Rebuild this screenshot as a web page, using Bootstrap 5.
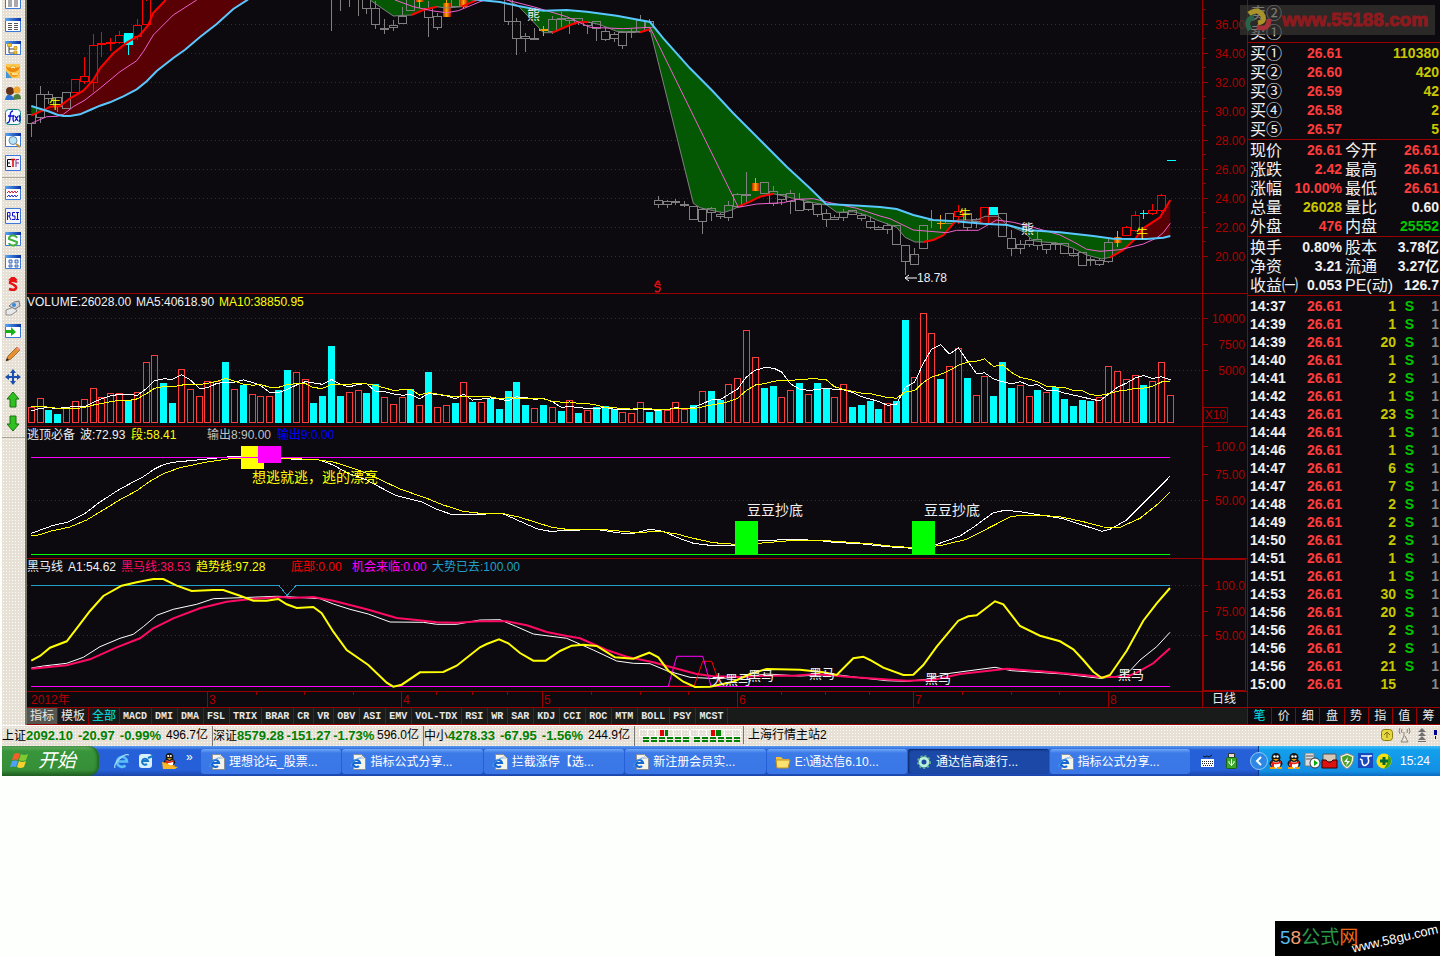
<!DOCTYPE html>
<html lang="zh-CN">
<head>
    <meta charset="UTF-8">
    <meta name="viewport" content="width=device-width, initial-scale=1.0">
    <title>通达信高速行情</title>
    <link href="https://cdn.jsdelivr.net/npm/bootstrap@5.3.0/dist/css/bootstrap.min.css" rel="stylesheet">
    <style>
        body { background: #fdfffd; font: 12px/16px "Liberation Sans", "Noto Sans CJK SC", sans-serif; color: #000; }
        button { font: inherit; color: inherit; background: none; border: 0; padding: 0; white-space: nowrap; }
        .app { margin-left: 2px; }
        .workspace { background: #0c0a0e; }

        /* Barra de ferramentas */
        .beige { background: radial-gradient(#fffdf4 1px, transparent 1px) 0 0 / 3px 3px #e6e0d6; }
        .tools { width: 25px; border-right: 2px solid #77786c; }
        .tool-list { margin-top: -10px; }
        .tool-list button { height: 23px; width: 22px; }
        .tool-list svg { width: 16px; height: 16px; display: block; margin: auto; }
        .tool-sep { height: 7px; border: 0; margin: 0; opacity: 1; background: linear-gradient(#a9a594, #a9a594) 0 3px / 100% 1px no-repeat; }

        /* Gráficos */
        .charts { min-width: 0; border-right: 1px solid #900; }
        .charts svg { display: block; width: 100%; height: auto; }
        .charts text { font-size: 12px; fill: #f0f0f0; }
        .charts .axis-text { fill: #b00000; text-anchor: end; }
        .charts .month-text { fill: #b00000; }
        .charts .note-text { font-size: 14px; }
        .charts .horse-text { font-size: 13px; }
        .frame-line { stroke: #900; fill: none; }
        .grid-line { stroke: #900; stroke-dasharray: 1 3; }
        .crisp { shape-rendering: crispEdges; }

        .tabs { height: 18px; background: #191b1a; color: #e8e8e8; border-top: 1px solid #900; border-bottom: 1px solid #900; }
        .tabs button { border-right: 1px solid #900; padding: 1px 3px 0; font-size: 12px; line-height: 15px; }
        .tabs .latin { font: 700 10px/15px "Liberation Mono", monospace; padding-right: 4px; }
        .tabs .picked { background: #55564f; }
        .cyan, .tabs .cyan { color: #00e8e8; }

        /* Cotações */
        .quotes { width: 192px; color: #f0f0f0; font-size: 16px; }
        .quotes table { table-layout: fixed; width: 100%; border-collapse: separate; border-spacing: 0; border-bottom: 1px solid #900; padding-top: 1px; }
        .quotes td, .quotes th { padding: 0 1px 0 2px; height: 19px; line-height: 19px; white-space: nowrap; font-weight: 400; text-align: left; }
        .quotes .num, .quotes .ticks td { font-size: 14px; font-weight: 700; text-align: right; padding-left: 0; }
        .quotes .ticks { border: 0; }
        .quotes .ticks td { height: 18px; line-height: 18px; }
        .quotes .ticks .clock { text-align: left; padding-left: 2px; }
        .asks { padding-top: 3px; }
        .w-label { width: 45px; }
        .w-value { width: 50px; }
        .w-label2 { width: 44px; }
        .up { color: #ff3c3c; }
        .vol { color: #c8c800; }
        .down { color: #00c800; }
        .dim { color: #888; }
        .side-tabs button { flex: 1; text-align: center; padding: 1px 0 0; background: #0c0a0e; }
        .side-tabs button:last-child { border: 0; }

        .site-mark { position: absolute; top: 5px; right: 5px; width: 195px; height: 30px; background: rgba(58, 58, 54, .65); color: #8d1a1e; font-size: 19px; font-weight: 700; line-height: 30px; -webkit-text-stroke: 1px #8d1a1e; }

        /* Barra de status */
        .status { height: 21px; line-height: 19px; border-top: 1px solid #fff; }
        .status .cell-box { width: 211px; border-right: 1px solid #777; }
        .status b { color: #008000; font-size: 13px; }
        .status .lights { width: 109px; border-right: 1px solid #777; }

        /* Barra de tarefas */
        .taskbar { height: 30px; color: #fff; background: linear-gradient(#5c9cf0, #2560d8 4px, #2560d8 24px, #1a45a8); }
        .start { width: 97px; border-radius: 0 10px 10px 0; font-size: 19px; font-style: italic; background: linear-gradient(#6cb468, #38953a 5px, #368f38 24px, #205c22); box-shadow: inset -2px 0 3px #1f6424; }
        .quick { width: 102px; padding-left: 15px; }
        .task { flex: 1 1 0; min-width: 0; margin: 3px 1px 2px 0; padding-left: 8px; border-radius: 3px; background: linear-gradient(#70a8f8, #3c7ae8 4px, #3a76e6); overflow: hidden; }
        .task.pressed { background: #1c48a8; box-shadow: inset 1px 1px 2px #0c2868; }
        .tasks { flex: 1 1 0; min-width: 0; }
        .langs { width: 67px; padding-left: 10px; gap: 12px; }
        .tray { width: 182px; background: linear-gradient(#40bcf8, #12a0ec 4px, #1290e4 25px, #0c6cc0); border-left: 1px solid #083c90; }
        .tray .arrow { margin-left: -9px; }

        .maker { width: 165px; height: 35px; background: #000; font-size: 19px; line-height: 34px; padding-left: 5px; }
        .maker-site { position: absolute; left: 76px; top: 10px; color: #fff; font-size: 13px; line-height: 16px; transform: rotate(-13deg); }
    </style>
</head>
<body>
<!-- Ícones -->
<svg width="0" height="0" class="position-absolute">
    <defs>
        <linearGradient id="fire"><stop offset="0" stop-color="#b81c00"/><stop offset=".5" stop-color="#ffa800"/><stop offset="1" stop-color="#b81c00"/></linearGradient>
        <linearGradient id="bar"><stop offset="0" stop-color="#58a8f8"/><stop offset="1" stop-color="#0830a0"/></linearGradient>
        <symbol id="win" viewBox="0 0 16 16"><path d="M.5 1.5h15v13H.5z" fill="#fff" stroke="#3c78d8"/><path d="M0 1h16v3H0z" fill="url(#bar)"/></symbol>
        <symbol id="page-e" viewBox="0 0 16 16"><path d="M3.5.5h8l4 4v11h-12z" fill="#f4f4ea" stroke="#8a8f98"/><path d="M11 1v4h4" fill="#cfd3d8"/><path d="M2 9h8a3.500 3.500 0 1 0-1 3" fill="none" stroke="#1668d0" stroke-width="2.2"/><path d="M1 13C0 10 7 3 11 4" fill="none" stroke="#4aa0f0"/></symbol>
        <symbol id="penguin" viewBox="0 0 16 16"><ellipse cx="8" cy="10.500" rx="6.500" ry="4.500" fill="#181818"/><ellipse cx="8" cy="11.500" rx="4.500" ry="4" fill="#fff"/><circle cx="8" cy="4.500" r="4.500" fill="#181818"/><circle cx="6.500" cy="3.500" r="1.200" fill="#fff"/><circle cx="9.500" cy="3.500" r="1.200" fill="#fff"/><path d="M5 6h6l-3 2z" fill="#f8a800"/><path d="M3 8q5 3 10 0v2q-5 2-7 1v3H4v-4z" fill="#e82010"/><path d="M2 14h5v2H2zM9 14h5v2H9z" fill="#f8a000"/></symbol>
        <symbol id="ie" viewBox="0 0 16 16"><path d="M3 8.500h10a5 5 0 1 0-1.500 4" fill="none" stroke="#5cc0f8" stroke-width="2.600"/><path d="M1 15C-1 11 9 0 15 2" fill="none" stroke="#a8dcf8" stroke-width="1.200"/></symbol>
    </defs>
</svg>

<div class="d-flex flex-column min-vh-100 overflow-hidden">
<div class="app">
    <div class="workspace d-flex position-relative">
        <nav class="tools beige overflow-hidden flex-shrink-0">
            <div class="tool-list d-flex flex-column">
                <button aria-label="报表"><svg viewBox="0 0 16 16"><use href="#win"/><path d="M3 6h4M3 8h4M3 10h4M3 12h4M9 6h4M9 8h4M9 10h4M9 12h4" stroke="#555"/></svg></button>
                <button aria-label="列表"><svg viewBox="0 0 16 16"><use href="#win"/><path d="M3 6.500h4M3 8.500h4M3 10.500h4M3 12.500h4M9 6.500h4M9 8.500h4M9 10.500h4M9 12.500h4" stroke="#555"/></svg></button>
                <button aria-label="树"><svg viewBox="0 0 16 16"><use href="#win"/><path d="M4 6v7h5M4 9h6" stroke="#444" fill="none"/><path d="M2.500 3.500h4v3h-4zM9 6.500h3v3H9zM9 11h3v3H9z" fill="#f4c838" stroke="#b08010" stroke-width=".6"/></svg></button>
                <button aria-label="财务"><svg viewBox="0 0 16 16"><path d="M1 1h14v14H1z" fill="#f8c850"/><path d="M1 8l6 7H1z" fill="#4098d8"/><path d="M1 3q3 3 4 1 3-3 6 0 1 2 4-1-1 6-7 6T1 3z" fill="#f08808"/><path d="M5 10h9q-1 4-5 4t-4-4z" fill="#f89820"/><path d="M6 5q2-2 4 0M7 11h6" stroke="#fff4b0" stroke-width="1.500" fill="none"/></svg></button>
                <button aria-label="用户"><svg viewBox="0 0 16 16"><circle cx="5" cy="5" r="4" fill="#603018"/><circle cx="12" cy="4" r="3.500" fill="#f0a830"/><path d="M0 14q1-6 5-5t4 5z" fill="#2c70d0"/><path d="M8 14q0-6 4-6t4 5z" fill="#50803c"/></svg></button>
                <button aria-label="公式"><svg viewBox="0 0 16 16"><rect x=".5" y=".5" width="15" height="15" rx="3" fill="#f4faff" stroke="#108888"/><path d="M2 14q3 0 3-6t3-6M3 7h5M9 6q-2 4 0 7M14 6q2 4 0 7M10 7l3 5M13 7l-3 5" fill="none" stroke="#1010d0" stroke-width="1.300"/></svg></button>
                <button aria-label="搜索"><svg viewBox="0 0 16 16"><use href="#win"/><circle cx="8" cy="8.500" r="4" fill="#b8e4f8" stroke="#6888a8"/><path d="M11 12l4 3" stroke="#c09030" stroke-width="2"/></svg></button>
                <button aria-label="ETF"><svg viewBox="0 0 16 16"><path d="M.5.500h15v15H.5z" fill="#f4f4fa" stroke="#3c78d8"/><path d="M6 4.500H2.500v7H6M2.500 8H5" fill="none" stroke="#000"/><path d="M6 4.500h4M8 4.500V12" stroke="#e00000" stroke-width="1.500"/><path d="M14 4.500h-3V12M11 8h3" fill="none" stroke="#803090"/></svg></button>
                <hr class="tool-sep">
                <button aria-label="走势"><svg viewBox="0 0 16 16"><use href="#win"/><path d="M2 8l2-2 1 2 2-2 1 2 2-2 1 2 2-2" fill="none" stroke="#d02040"/><path d="M2 12l2-2 1 2 2-2 1 2 2-2 1 2 2-2" fill="none" stroke="#2030d0"/></svg></button>
                <button aria-label="RSI"><svg viewBox="0 0 16 16"><path d="M.5.500h15v15H.5z" fill="#f4f4fa" stroke="#3c78d8"/><path d="M2.500 12V4.500H5V8H2.500M4 8l2 4M10 4.500H7.500V8H10v3.500H7M11 4.500h3M12.500 4.500v7M11 11.500h3" fill="none" stroke="#1010c8"/></svg></button>
                <button aria-label="刷新"><svg viewBox="0 0 16 16"><use href="#win"/><path d="M12 7a4 3 0 0 0-8 1l8 3a4 3 0 0 1-8 1" fill="none" stroke="#40b040" stroke-width="2"/></svg></button>
                <button aria-label="多窗"><svg viewBox="0 0 16 16"><use href="#win"/><path d="M4 6h3v3H4zM10 6h3v3h-3zM4 11h3v2H4zM10 11h3v2h-3z" fill="#cde" stroke="#4068c0"/></svg></button>
                <button aria-label="除权"><svg viewBox="0 0 16 16"><path d="M12 5q-7-3-7 1 7 3 6 5-1 3-7 1M6 2l2-2 2 2z" fill="none" stroke="#e81010" stroke-width="2.400"/></svg></button>
                <button aria-label="电话"><svg viewBox="0 0 16 16"><path d="M1 10l8-3 3 4-6 4H1z" fill="#e8e8e8" stroke="#909090"/><path d="M4 6q4-5 10-5l1 5-5 3z" fill="#d0d4d8" stroke="#787878"/><circle cx="9" cy="5" r="2" fill="#3888d8"/></svg></button>
                <button aria-label="导出"><svg viewBox="0 0 16 16"><use href="#win"/><path d="M0 7h6V4l5 5-5 4v-3H0z" fill="#18b018"/></svg></button>
                <button aria-label="画线"><svg viewBox="0 0 16 16"><path d="M1 15l2-5 9-9 3 3-9 9z" fill="#e89030" stroke="#805020" stroke-width=".7"/><path d="M11 2l3 3 1-2-2-2z" fill="#f09090"/><path d="M1 15l1-3 2 2z" fill="#222"/></svg></button>
                <button aria-label="移动"><svg viewBox="0 0 16 16"><path d="M8 0l3 4H9v3h3V5l4 3-4 3V9H9v3h2l-3 4-3-4h2V9H4v2L0 8l4-3v2h3V4H5z" fill="#1c50b0"/></svg></button>
                <button aria-label="向上"><svg viewBox="0 0 16 16"><path d="M8 0l6 7h-3v8H5V7H2z" fill="#30c020" stroke="#187010"/></svg></button>
                <button aria-label="向下"><svg viewBox="0 0 16 16"><path d="M8 16l6-7h-3V1H5v8H2z" fill="#30c020" stroke="#187010"/></svg></button>
                <hr class="tool-sep">
            </div>
        </nav>

        <!-- Gráficos -->
        <main class="charts flex-grow-1 d-flex flex-column">
            <svg viewBox="27 0 1220 294">
                <g id="priceGrid"></g>
                <g id="priceArea"></g>
                <g id="candles" class="crisp"></g>
                <g id="priceLines"></g>
                <text x="49" y="109" style="fill:#ff0">牛</text>
                <text x="959" y="219" style="fill:#ff0">牛</text>
                <text x="1136" y="238" style="fill:#ff0">牛</text>
                <text class="horse-text" x="527" y="19">熊</text>
                <text class="horse-text" x="1021" y="233">熊</text>
                <path d="M905 278h12M909 275l-4 3 4 3" stroke="#fff" fill="none"/>
                <text x="917" y="282">18.78</text>
                <path d="M661 285q-6-2-6 0 0 2 3 2t2 3-5 1M656 283l2-2 2 2" stroke="#e01010" stroke-width="1.500" fill="none"/>
                <path class="frame-line crisp" d="M27 293.500h1220M1202.500 0v294"/>
            </svg>
            <svg viewBox="27 294 1220 133">
                <g id="volGrid"></g>
                <g id="volBars" class="crisp"></g>
                <g id="volLines" class="crisp"></g>
                <text x="27" y="306">VOLUME:26028.00</text><text x="136" y="306">MA5:40618.90</text><text x="219" y="306" style="fill:#ff0">MA10:38850.95</text>
                <path class="frame-line crisp" d="M27 426.500h1220M1202.500 294v133M1203.500 407.500h24v15h-24z"/>
                <text class="axis-text" x="1226" y="419">X10</text>
            </svg>
            <svg viewBox="27 427 1220 132">
                <g id="waveGrid"></g>
                <g id="waveLines" class="crisp"></g>
                <path d="M241 446h23v23h-23z" fill="#ff0"/><path d="M258 446h23v17h-23z" fill="#f0f"/>
                <path d="M735 521h23v33h-23zM912 521h23v33h-23z" fill="#0f0"/>
                <path class="crisp" d="M31 457.500h1139" stroke="#f0f"/><path class="crisp" d="M31 554.500h1139" stroke="#0f0"/>
                <text class="note-text" x="252" y="482" style="fill:#ff0">想逃就逃，逃的漂亮</text>
                <text class="note-text" x="747" y="515">豆豆抄底</text><text class="note-text" x="924" y="515">豆豆抄底</text>
                <text x="27" y="439">逃顶必备</text><text x="80" y="439">波:72.93</text><text x="131" y="439" style="fill:#ff0">段:58.41</text>
                <text x="207" y="439" style="fill:#c0c0c0">输出8:90.00</text><text x="277" y="439" style="fill:#00f">输出9:0.00</text>
                <path class="frame-line crisp" d="M27 558.500h1220M1202.500 427v132"/>
            </svg>
            <svg viewBox="27 559 1220 133">
                <g id="horseGrid"></g>
                <g id="horseLines"></g>
                <text class="horse-text" x="712" y="684">大黑马</text><text class="horse-text" x="748" y="680">黑马</text>
                <text class="horse-text" x="809" y="678">黑马</text><text class="horse-text" x="925" y="683">黑马</text><text class="horse-text" x="1118" y="679">黑马</text>
                <text x="27" y="571">黑马线</text><text x="68" y="571">A1:54.62</text><text x="121" y="571" style="fill:#ff0a64">黑马线:38.53</text>
                <text x="196" y="571" style="fill:#ff0">趋势线:97.28</text><text x="291" y="571" style="fill:#f00">底部:0.00</text>
                <text x="352" y="571" style="fill:#f0f">机会来临:0.00</text><text x="432" y="571" style="fill:#20a0c8">大势已去:100.00</text>
                <path class="frame-line crisp" d="M27 691.500h1220M1202.500 559v133M1203.500 559.500h42v131h-42z"/>
            </svg>
            <svg viewBox="27 692 1220 15">
                <g id="months" class="crisp"></g>
                <text class="month-text" x="31" y="704">2012年</text>
                <path class="frame-line crisp" d="M1202.500 692v15"/>
                <text x="1212" y="703">日线</text>
            </svg>
            <div id="indicatorTabs" class="tabs d-flex overflow-hidden">
                <button class="picked">指标</button><button>模板</button><button class="cyan">全部</button>
            </div>
        </main>

        <!-- Cotações -->
        <aside class="quotes d-flex flex-column flex-shrink-0">
            <div class="asks"><table><tr><th>卖②</th></tr><tr><th>卖①</th></tr></table></div>
            <table id="bids"><colgroup><col class="w-label"><col class="w-value"><col></colgroup></table>
            <table id="facts"><colgroup><col class="w-label"><col class="w-value"><col class="w-label2"><col></colgroup></table>
            <table id="shares"><colgroup><col class="w-label"><col class="w-value"><col class="w-label2"><col></colgroup></table>
            <table id="ticks" class="ticks"><colgroup><col class="w-label"><col class="w-value"><col style="width:54px"><col style="width:18px"><col></colgroup></table>
            <div class="tabs side-tabs d-flex mt-auto">
                <button class="cyan">笔</button><button>价</button><button>细</button><button>盘</button><button>势</button><button>指</button><button>值</button><button>筹</button>
            </div>
        </aside>
        <div class="site-mark d-flex">
            <svg class="me-1 flex-shrink-0" width="38" height="30" viewBox="0 0 38 30" fill="none" stroke-width="5"><path d="M9 9q9-7 14 2 2 6-5 7" stroke="#a89428"/><path d="M14 12q-10 3-4 13" stroke="#28644a"/><path d="M17 22q12 4 12-8" stroke="#a83038"/></svg>
            <span>www.55188.com</span>
        </div>
    </div>

    <!-- Status -->
    <footer class="status beige d-flex">
        <div class="cell-box d-flex justify-content-between pe-1"><span>上证<b>2092.10</b></span><b>-20.97</b><b>-0.99%</b><span>496.7亿</span></div>
        <div class="cell-box d-flex justify-content-between pe-1"><span>深证<b>8579.28</b></span><b>-151.27</b><b>-1.73%</b><span>596.0亿</span></div>
        <div class="cell-box d-flex justify-content-between pe-1"><span>中小<b>4278.33</b></span><b>-67.95</b><b>-1.56%</b><span>244.9亿</span></div>
        <svg class="lights crisp" height="18" viewBox="0 0 109 18">
            <path d="M4.500 3.500h50v7h-50zM56.500 3.500h50v7h-50zM12.500 3v7M20.500 3v7M38.500 3v7M46.500 3v7M64.500 3v7M72.500 3v7M90.500 3v7M98.500 3v7" fill="none" stroke="#fff"/>
            <path d="M25 4h4v6h-4zM77 4h4v6h-4z" fill="#e00000"/><path d="M30 4h3v6h-3zM82 4h5v6h-5z" fill="#008000"/>
            <path d="M8 12h46M60 12h46M8 15h46M60 15h46" stroke="#008000" stroke-width="2" stroke-dasharray="6 2"/>
        </svg>
        <span class="ps-1 flex-grow-1">上海行情主站2</span>
        <svg width="62" height="18" viewBox="0 0 62 18">
            <rect x="3.500" y="3.500" width="11" height="11" rx="3" fill="#e8d840" stroke="#8a7c10"/><path d="M9 12V6M6 9l3-3 3 3" stroke="#7a6c10" fill="none"/>
            <path d="M26 6v4l-3 6h7l-3-6M22 2q-2 3 0 6M31 2q2 3 0 6M24 3q-1 2 0 4M29 3q1 2 0 4" fill="none" stroke="#8a8474"/>
            <path d="M44 2l4 4h-8zM44 6l4 4h-8zM44 10l4 4h-8zM40 15h8v1h-8z" fill="#707070"/><path d="M56 4h3v5h-3zM57 10h1v3h-1z" fill="#000090"/>
        </svg>
    </footer>

    <!-- Barra de tarefas -->
    <nav class="taskbar d-flex">
        <button class="start d-flex align-items-center gap-2 ps-2">
            <svg width="20" height="20" viewBox="0 0 20 20"><path d="M4 3q3-2 6 0L8 9q-3-1-6 0z" fill="#f06028"/><path d="M11 3q3 2 7 0l-2 6q-4 2-7 0z" fill="#80cc30"/><path d="M2 10q3-1 6 0l-2 6q-3-1-6 0z" fill="#50a0f8"/><path d="M9 10q3 2 7 0l-2 6q-4 2-7 0z" fill="#f8d030"/></svg>开始
        </button>
        <div class="quick d-flex align-items-center gap-2">
            <svg width="16" height="16"><use href="#ie"/></svg>
            <svg width="16" height="16" viewBox="0 0 16 16"><rect x="1" y="1" width="13" height="14" rx="3" fill="#d8f0fc"/><path d="M5 8h5a3 3 0 1 0-1 3M10 5l5-2" fill="none" stroke="#1878c8" stroke-width="2"/></svg>
            <svg width="16" height="16" viewBox="0 0 16 16"><use href="#penguin" width="15" height="14"/><path d="M0 9q5 1 8 3t8 2l-3 2H1z" fill="#f8b828"/></svg>
            <span class="pb-2">»</span>
        </div>
        <div id="tasks" class="tasks d-flex"></div>
        <div class="langs d-flex align-items-center">
            <svg width="13" height="14" viewBox="0 0 13 14"><path d="M0 5h13v8H0z" fill="#fff"/><path d="M1 7.500h11M1 9.500h11M2 11.500h9" stroke="#222" stroke-dasharray="1 1"/><path d="M2 2l2 1 2-1 2 1 3-2" stroke="#111" fill="none"/></svg>
            <svg width="11" height="16" viewBox="0 0 11 16"><path d="M2.500.500h6v5h-6z" fill="#ddd" stroke="#333"/><rect x=".5" y="4.500" width="10" height="11" rx="1" fill="#38a828" stroke="#1c6014"/><path d="M5.500 13V6M3 8v2l2.500 2L8 10V8" stroke="#fff" fill="none"/></svg>
        </div>
        <div class="tray d-flex align-items-center">
            <button class="arrow" aria-label="显示"><svg class="d-block" width="18" height="20" viewBox="0 0 18 20"><circle cx="9" cy="10" r="8.500" fill="#2c88e4" stroke="#90c8f8"/><path d="M11 6l-4 4 4 4" stroke="#fff" stroke-width="2" fill="none"/></svg></button>
            <svg width="124" height="16" viewBox="0 0 124 16">
                <use href="#penguin" width="16" height="16"/><use href="#penguin" x="18" width="16" height="16"/>
                <path d="M37 0h9v13h-9z" fill="#ddd" stroke="#777"/><path d="M38 3h7M38 6h7" stroke="#555"/><circle cx="47" cy="10" r="5" fill="#fff" stroke="#333"/><path d="M46 7l4 3-4 3z" fill="#0a0"/>
                <path d="M55 1h13v8H55z" fill="#d8c8b8" stroke="#555"/><path d="M54 7h4l2 2h3l2-2h4v8H54z" fill="#e01010" stroke="#300"/>
                <path d="M72 3l7-3 7 3q0 9-7 13-7-4-7-13z" fill="#f4f4d8" stroke="#888"/><path d="M74 4l5-2 5 2q0 7-5 10-5-3-5-10z" fill="#48a028"/><path d="M80 4l-4 5h3l-1 4 4-5h-3z" fill="#fff"/>
                <path d="M90 0h15v15H90z" fill="#1848c0"/><path d="M92 6l2 1q0 7 4 5t2-7q1-3 4-2M93 3h9" stroke="#fff" stroke-width="1.500" fill="none"/>
                <circle cx="116" cy="8" r="7.500" fill="#f8e010"/><path d="M120 2a7.500 7.500 0 0 1-4 13.500q5-6 4-13.500z" fill="#38a020"/><path d="M116 4v8M112 8h8" stroke="#063" stroke-width="3"/>
            </svg>
            <span class="ms-2">15:24</span>
        </div>
    </nav>
</div>
<div class="maker position-relative mt-auto align-self-end"><span style="color:#58b8f0">5</span><span style="color:#f0a070">8</span><span style="color:#289848">公式</span><span style="color:#f06818">网</span><span class="maker-site">www.58gu.com</span></div>
</div>

<script src="https://cdn.jsdelivr.net/npm/bootstrap@5.3.0/dist/js/bootstrap.bundle.min.js"></script>
<script>
    // Coordenadas dos dados em terços de pixel
    const el = id => document.getElementById(id);
    const barX = i => Math.floor(31.3 + i * 8.83) + 0.5;
    const row = y => Math.floor(y / 3) + 0.5;
    const pts = (list, dy) => list.map(([x, y]) => `${(x / 3).toFixed(1)},${((y + dy) / 3).toFixed(1)}`).join(' ');
    const parse = s => s.split(' ').map(p => p.split(',').map(Number));
    const line = (list, color, width = 1, dy = 0) => `<polyline points="${pts(list, dy)}" fill="none" stroke="${color}" stroke-width="${width}"/>`;

    function grid(id, ys, labels, left = 27) {
        el(id).innerHTML = ys.map(y => `<path class="grid-line crisp" d="M${left} ${y}.5H1202"/>`).join('') +
            labels.map(([y, t]) => `<path class="frame-line crisp" d="M1203 ${y}.5h5"/><text class="axis-text" x="1245" y="${y + 5}">${t}</text>`).join('');
    }

    // Preço
    const prices = [];
    for (let p = 36, y = 24; p >= 20; p -= 2, y += 29) prices.push([y, p + '.00']);
    grid('priceGrid', prices.map(p => p[0]), prices);
    el('priceGrid').innerHTML += prices.map(([y]) => `<path class="frame-line crisp" d="M1203 ${y - 15}.5h3"/>`).join('');

    const slow = parse('94,318 120,326 145,334 172,344 190,348 210,348 240,343 270,330 300,317 330,307 370,289 410,268 440,244 470,213 520,174 555,149 600,111 650,72 700,27 742,0 800,-60 1060,-60 1100,-10 1250,-20 1440,0 1500,6 1555,18 1630,32 1700,30 1760,35 1850,47 1950,66 1990,115 2070,205 2140,275 2200,340 2280,420 2360,500 2430,565 2478,612 2580,617 2640,621 2690,627 2740,645 2800,660 2866,664 2950,671 3022,675 3080,690 3180,697 3280,708 3340,716 3405,717 3440,717 3490,713 3511,708');
    const fast = parse('94,346 120,335 130,331 150,320 180,318 210,295 250,272 280,240 300,205 340,160 380,128 420,105 445,75 460,38 497,0 560,-60 1060,-60 1110,0 1180,48 1234,45 1270,30 1310,20 1340,24 1385,20 1430,0 1470,-30 1555,18 1595,60 1630,98 1657,98 1710,75 1735,67 1765,66 1800,74 1850,94 1920,97 1950,88 2080,610 2100,623 2140,632 2170,638 2200,628 2215,620 2250,605 2280,590 2320,581 2380,595 2440,608 2480,615 2510,637 2560,635 2600,646 2630,660 2690,682 2715,712 2745,726 2770,726 2800,720 2830,706 2850,682 2866,664 2875,660 2930,660 2955,649 2995,649 3022,675 3070,695 3100,722 3130,726 3170,729 3220,745 3260,765 3305,777 3330,772 3370,750 3405,717 3430,685 3480,652 3511,600');
    const midLeft = parse('94,370 140,350 172,349 190,343 220,320 255,300 300,265 360,215 410,182 430,155 460,105 520,45 590,0');
    const midRight = parse('1185,0 1240,20 1300,33 1340,38 1375,32 1440,5 1480,-8 1520,0 1600,20 1700,50 1770,82 1870,86 1950,82 2215,622 2270,612 2350,608 2390,598 2440,596 2490,608 2570,625 2640,648 2670,656 2740,690 2840,698 2870,691 2935,691 2990,660 3040,667 3100,682 3180,705 3220,725 3260,748 3300,754 3360,749 3430,732 3470,714 3490,698 3511,670');
    const cut = (list, a, b) => list.filter(p => p[0] >= a && p[0] <= b);
    const area = (a, b, color) => `<polygon points="${pts(cut(fast, a, b).concat(cut(slow, a, b).reverse()), 0)}" fill="${color}"/>`;
    el('priceArea').innerHTML = area(94, 130, '#045804') + area(130, 1060, '#580004') + area(1060, 1440, '#045804') +
        area(1555, 2866, '#045804') + area(2866, 3022, '#580004') + area(3022, 3405, '#045804') + area(3405, 3511, '#580004');
    el('priceLines').innerHTML = line(cut(fast, 1100, 3330), '#808080') +
        [[94, 497], [1234, 1310], [1385, 1430], [1657, 1765], [1920, 1950], [2215, 2320], [2770, 2875], [3330, 3511]].map(([a, b]) => line(cut(fast, a, b), '#f00', 2)).join('') +
        line(midLeft, '#f060d0') + line(midRight, '#f060d0') + line(slow, '#58c8ff', 2);

    // [índice, máxima, topo, base, mínima, tipo]
    const candles = `0,343,343,370,410,g 1,255,283,352,367,g 2,272,283,295,310,g 3,292,292,320,335,g 4,277,277,325,325,g 5,235,238,277,277,r 6,168,229,244,250,r 7,99,136,247,275,r 8,93,131,133,170,r 9,112,127,130,152,r 10,91,106,127,130,r 11,99,99,132,164,c 12,55,76,109,118,r 13,0,-10,74,74,r
        34,-10,-10,-6,90,g 35,-10,-10,-6,30,g 36,-10,-10,-6,20,g 37,-10,-10,-6,45,g 38,-10,-10,26,40,g 39,0,26,74,86,g 40,55,85,87,101,g 41,58,76,82,90,g 42,20,49,71,71,g 43,-10,-10,30,30,g 44,-10,-10,4,22,o 45,0,25,52,110,g 46,37,49,82,88,g 47,-10,6,50,50,o 48,-10,-10,20,20,g 49,-10,-10,18,26,o
        54,-10,-10,65,74,g 55,52,65,115,164,g 56,97,109,116,155,g 57,82,115,119,119,g 58,75,89,90,107,o 59,45,58,94,100,g 60,34,55,57,78,g 61,52,56,60,101,g 62,55,55,68,72,g 63,66,68,77,101,g 64,62,65,84,122,g 65,80,94,118,122,g 66,94,103,115,125,g 67,97,97,136,146,g 68,84,94,97,113,g 69,42,61,94,94,g 70,55,64,82,94,g
        71,586,601,613,623,g 72,598,604,613,623,g 73,595,603,607,613,g 74,600,613,616,620,g 75,619,619,658,658,g 76,622,628,664,701,g 77,619,626,637,662,g 78,637,643,649,655,g 79,601,616,652,661,g 80,577,583,619,622,g 81,514,583,587,605,g 82,531,546,570,570,o 83,546,546,580,580,g 84,556,574,610,616,g 85,583,583,598,613,g 86,568,580,604,641,g 87,577,598,631,631,g 88,604,607,628,630,g 89,610,613,643,648,g 90,625,640,658,680,g 91,643,652,658,658,g 92,625,637,652,661,g 93,628,631,643,643,g 94,637,645,655,661,g 95,646,664,682,685,g
        96,676,682,688,688,g 97,667,676,688,700,g 98,676,676,733,733,g 99,736,736,784,824,g 100,742,763,793,793,g 101,676,676,745,745,g 102,628,660,662,682,g 103,642,670,671,685,o 104,640,640,670,670,g 105,612,634,648,670,r 106,636,640,682,690,g 107,652,658,664,682,g 108,618,622,670,670,r 109,622,622,643,643,c 110,640,640,709,709,g 111,688,715,745,767,g 112,718,733,745,761,g 113,712,721,733,739,g 114,691,718,736,748,g 115,730,733,748,760,g 116,724,729,732,748,g 117,730,730,760,760,g 118,745,760,766,768,g 119,757,757,796,796,g 120,769,778,781,796,g 121,772,781,793,795,g 122,715,727,784,788,g
        123,690,708,726,738,o 124,676,682,706,706,r 125,630,646,691,693,r 126,628,640,641,655,c 127,610,631,640,642,r 128,580,586,631,633,r 129,481,481,481,481,c`;
    const tones = { g: '#808080', r: '#f00', c: '#0ff', o: '#f8a000' };
    el('candles').innerHTML = candles.trim().split(/\s+/).map(s => {
        const [i, hi, top, base, lo, kind] = s.split(',');
        const x = barX(+i), y1 = row(top), y2 = row(base), tone = tones[kind];
        const solid = kind === 'c' ? tone : kind === 'o' && y2 - y1 > 1 ? 'url(#fire)' : 'none';
        return `<path d="M${x} ${row(hi)}V${y1}M${x} ${y2}V${row(lo)}" stroke="${tone}"/>` +
            (y2 - y1 < 1 ? `<path d="M${x - 4} ${y1}h9" stroke="${tone}"/>` : `<rect x="${x - 4}" y="${y1}" width="8" height="${y2 - y1}" fill="${solid}" stroke="${solid.startsWith('url') ? 'none' : tone}"/>`);
    }).join('');

    // Volume
    grid('volGrid', [318, 370], [[318, '10000'], [344, '7500'], [370, '5000']]);
    const vols = ('r351 r324 c360 c373 r354 r334 r328 r294 r322 r310 r310 c332 r307 r217 r196 c280 c340 r238 r298 r319 r274 r274 c216 r298 c286 r313 r319 r319 c300 c240 r247 r268 c340 c319 c168 c319 r307 r301 c310 c283 r322 r343 r322 c298 r346 c247 r352 r346 c340 r277 c337 r337 ' +
        'c328 c358 c304 c277 c346 r355 c346 r352 c364 r331 c370 r361 c352 c349 c358 r367 r370 r337 c367 c361 r361 r337 r358 c346 r304 c304 c330 r283 r265 r121 r202 c295 c289 r322 r301 c280 r313 c280 c298 r322 r283 c352 c346 c334 c358 r340 c334 c90 r262 r70 r130 c268 r229 r175 ' +
        'c264 r316 r259 c319 c217 c295 r286 r319 c301 r307 c292 c328 c349 c331 c334 r322 r229 r244 r268 r256 c286 r274 r217 r316').split(' ');
    el('volBars').innerHTML = vols.map((v, i) => {
        const x = barX(i) - 3, y = row(+v.slice(1) + 870), up = v[0] === 'r';
        return `<rect x="${x}" y="${y}" width="6" height="${422.5 - y}" fill="${up ? 'none' : '#0ff'}" stroke="${up ? '#ff3c3c' : '#0ff'}"/>`;
    }).join('');
    const heights = [55, 60, 60, 60, 60, 32, 32, 32, 32].concat(vols.map(v => 398 - v.slice(1)));
    const average = n => vols.map((v, i) => [barX(i) * 3, 1268 - heights.slice(i + 10 - n, i + 10).reduce((a, b) => a + b) / n]);
    el('volLines').innerHTML = line(average(5), '#fff') + line(average(10), '#ff0');

    // Onda
    grid('waveGrid', [500], [[446, '100.0'], [474, '75.00'], [500, '50.00']]);
    const wave = parse('94,730 160,706 205,696 255,670 300,636 360,597 430,560 465,536 490,524 520,517 600,509 690,500 840,503 880,508 955,509 1000,525 1040,548 1100,570 1140,592 1190,617 1265,636 1310,658 1360,675 1440,673 1505,670 1540,685 1610,716 1650,724 1740,720 1795,719 1860,729 1900,730 1950,718 1990,724 2030,742 2080,760 2130,766 2205,766 2280,752 2385,748 2460,752 2500,757 2590,762 2660,770 2740,775 2805,765 2880,738 2920,712 2980,668 3015,661 3060,665 3190,686 3250,706 3305,724 3330,718 3380,690 3430,640 3510,559');
    const trail = parse('94,738 120,734 150,724 210,711 260,690 310,660 360,629 410,602 450,574 490,551 540,533 620,516 690,506 800,502 950,509 1000,516 1060,535 1100,550 1200,597 1280,625 1330,645 1390,664 1440,670 1510,671 1560,682 1655,712 1700,718 1800,718 1900,727 1985,725 2030,732 2080,745 2140,758 2205,763 2275,760 2370,752 2460,751 2550,757 2610,761 2670,768 2740,773 2820,767 2900,748 2960,717 3030,681 3060,676 3120,676 3180,680 3250,695 3310,711 3360,712 3420,685 3480,637 3510,607');
    el('waveLines').innerHTML = line(wave, '#fff', 1, 870) + line(trail, '#ff0', 1, 870);

    // Cavalo negro
    grid('horseGrid', [585, 635], [[585, '100.0'], [611, '75.00'], [635, '50.00']]);
    const trend = parse('94,332 120,318 150,293 200,274 230,235 270,183 310,138 365,107 410,97 460,87 490,87 530,107 575,123 640,120 670,120 720,137 760,152 800,152 835,147 860,163 890,174 940,171 965,190 1000,245 1040,300 1105,345 1160,398 1180,410 1205,404 1260,367 1330,366 1370,347 1440,292 1460,282 1497,268 1525,280 1560,309 1600,332 1637,332 1680,303 1715,287 1750,284 1790,288 1845,322 1900,326 1948,308 1975,322 2005,362 2050,395 2085,411 2130,410 2200,395 2250,372 2300,357 2400,359 2470,367 2510,375 2560,325 2590,320 2610,330 2650,353 2710,375 2740,374 2770,345 2810,290 2875,212 2905,199 2930,196 2985,154 3010,163 3060,228 3120,257 3180,274 3220,298 3250,330 3280,365 3305,384 3330,375 3380,302 3430,212 3470,160 3510,114');
    const horse = parse('94,356 200,346 270,328 350,292 420,265 460,235 520,205 600,175 680,155 760,146 850,141 870,144 940,141 1000,152 1100,178 1190,204 1250,210 1310,217 1370,218 1440,214 1520,214 1580,226 1640,246 1700,258 1740,265 1820,300 1880,320 1960,337 2020,353 2090,372 2140,379 2220,381 2300,377 2380,377 2450,372 2540,380 2640,387 2720,392 2800,390 2880,372 3020,356 3140,365 3250,375 3300,381 3380,380 3410,368 3460,340 3510,295');
    const base = parse('94,354 130,348 200,340 250,322 300,290 360,265 400,253 430,230 470,196 520,178 590,163 640,146 720,143 830,139 860,140 960,146 1000,162 1050,178 1105,192 1170,216 1270,217 1310,223 1370,223 1440,210 1500,209 1550,230 1600,252 1700,265 1780,300 1850,333 1900,340 1950,341 2000,362 2070,382 2150,386 2240,380 2300,372 2400,378 2500,373 2580,383 2660,392 2720,394 2780,388 2850,370 2985,352 3035,362 3190,372 3300,385 3360,378 3390,362 3420,330 3470,290 3510,247');
    el('horseLines').innerHTML = `<path class="crisp" d="M31 686.5h1139" stroke="#f0f"/><path class="crisp" d="M31 585.5h248l8 10 9-10h874" stroke="#20a0c8" fill="none"/>` +
        line(base, '#fff', 1, 1650) + line(parse('2005,409 2082,409 2108,334 2135,334 2160,405'), '#f00', 1, 1650) +
        line(parse('2005,409 2030,319 2108,319 2133,409'), '#f0f', 1, 1650) + line(horse, '#ff0a64', 2, 1650) + line(trend, '#ff0', 2, 1650);

    // Meses
    el('months').innerHTML = [[207, 3], [401, 4], [542, 5], [737, 6], [913, 7], [1108, 8]].map(([x, m]) => `<path class="frame-line" d="M${x}.5 692v15"/><text class="month-text" x="${x + 2}" y="704">${m}</text>`).join('') +
        [256, 304, 353, 436, 472, 507, 591, 640, 688, 781, 825, 869, 962, 1011, 1059].map(x => `<path class="frame-line" d="M${x}.5 692v3"/>`).join('');

    el('indicatorTabs').innerHTML += 'MACD DMI DMA FSL TRIX BRAR CR VR OBV ASI EMV VOL-TDX RSI WR SAR KDJ CCI ROC MTM BOLL PSY MCST'.split(' ').map(t => `<button class="latin">${t}</button>`).join('');

    // Tabelas de cotação
    const add = (id, html) => el(id).insertAdjacentHTML('beforeend', `<tbody>${html}</tbody>`);
    add('bids', [['①', '26.61', 110380], ['②', '26.60', 420], ['③', '26.59', 42], ['④', '26.58', 2], ['⑤', '26.57', 5]]
        .map(([n, p, v]) => `<tr><th>买${n}</th><td class="num up">${p}</td><td class="num vol">${v}</td></tr>`).join(''));
    const pair = ([a, b, c, d, e, f]) => `<tr><th>${a}</th><td class="num ${c}">${b}</td><th>${d}</th><td class="num ${f}">${e}</td></tr>`;
    add('facts', [['现价', '26.61', 'up', '今开', '26.61', 'up'], ['涨跌', '2.42', 'up', '最高', '26.61', 'up'], ['涨幅', '10.00%', 'up', '最低', '26.61', 'up'],
        ['总量', '26028', 'vol', '量比', '0.60', ''], ['外盘', '476', 'up', '内盘', '25552', 'down']].map(pair).join(''));
    add('shares', [['换手', '0.80%', '', '股本', '3.78亿', ''], ['净资', '3.21', '', '流通', '3.27亿', ''], ['收益㈠', '0.053', '', 'PE(动)', '126.7', '']].map(pair).join(''));
    add('ticks', '14:37,1 14:39,1 14:39,20 14:40,1 14:41,2 14:42,1 14:43,23 14:44,1 14:46,1 14:47,6 14:47,7 14:48,2 14:49,2 14:50,2 14:51,1 14:51,1 14:53,30 14:56,20 14:56,2 14:56,2 14:56,21 15:00,15'
        .split(' ').map(s => s.split(',')).map(([t, v]) => `<tr><td class="clock">${t}</td><td class="up">26.61</td><td class="vol">${v}</td><td class="down">${t === '15:00' ? '' : 'S'}</td><td class="dim">1</td></tr>`).join(''));

    // Janelas abertas
    const pageIcon = '<svg class="flex-shrink-0" width="16" height="16"><use href="#page-e"/></svg>';
    const folderIcon = '<svg class="flex-shrink-0" width="16" height="16" viewBox="0 0 16 16"><path d="M1 3h5l2 2h6v3H1z" fill="#f0c040"/><path d="M1 6h14l-2 8H2z" fill="#fce070" stroke="#c09020"/></svg>';
    const gearIcon = '<svg class="flex-shrink-0" width="16" height="16" viewBox="0 0 16 16"><circle cx="8" cy="8" r="4" fill="none" stroke="#b8f0d8" stroke-width="3"/><circle cx="8" cy="8" r="6" fill="none" stroke="#60b090" stroke-width="2" stroke-dasharray="2 2"/></svg>';
    el('tasks').innerHTML = [[pageIcon, '理想论坛_股票...'], [pageIcon, '指标公式分享...'], [pageIcon, '拦截涨停【选...'], [pageIcon, '新注册会员实...'], [folderIcon, 'E:\\通达信6.10...'], [gearIcon, '通达信高速行...'], [pageIcon, '指标公式分享...']]
        .map(([icon, t], i) => `<button class="task d-flex align-items-center gap-1${i === 5 ? ' pressed' : ''}">${icon}${t}</button>`).join('');
</script>
</body>
</html>
